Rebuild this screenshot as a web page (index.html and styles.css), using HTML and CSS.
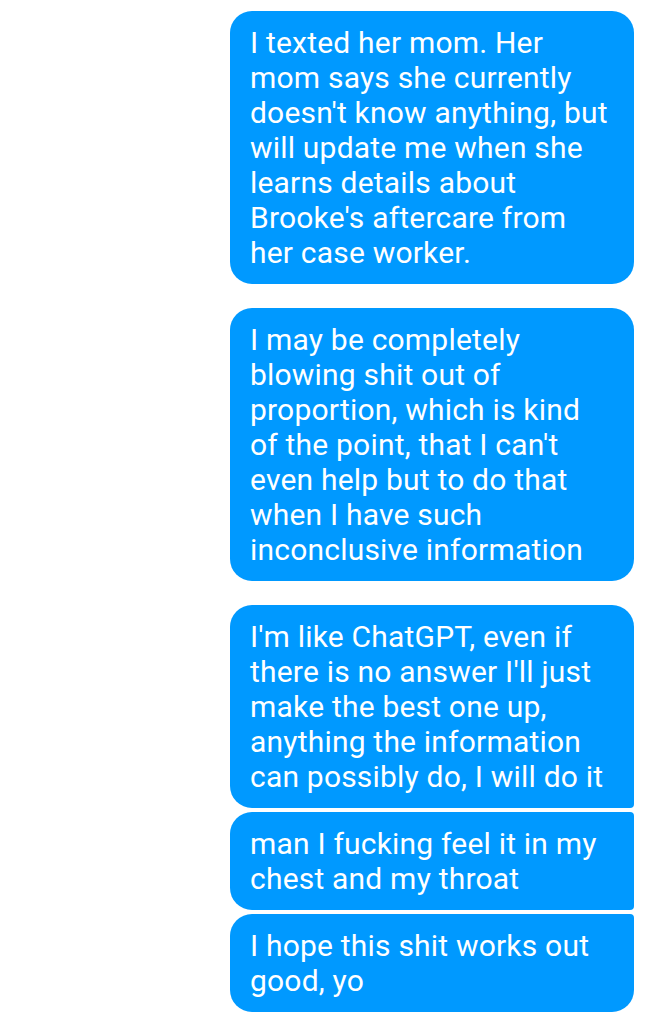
FILE: index.html
```html
<!DOCTYPE html>
<html>
<head>
<meta charset="utf-8">
<link rel="stylesheet" href="styles.css">
</head>
<body>
<div class="thread">
  <div class="group">
    <div class="bubble solo">I texted her mom. Her<br>mom says she currently<br>doesn't know anything, but<br>will update me when she<br>learns details about<br>Brooke's aftercare from<br>her case worker.</div>
  </div>
  <div class="group">
    <div class="bubble solo">I may be completely<br>blowing shit out of<br>proportion, which is kind<br>of the point, that I can't<br>even help but to do that<br>when I have such<br>inconclusive information</div>
  </div>
  <div class="group">
    <div class="bubble first">I'm like ChatGPT, even if<br>there is no answer I'll just<br>make the best one up,<br>anything the information<br>can possibly do, I will do it</div>
    <div class="bubble middle">man I fucking feel it in my<br>chest and my throat</div>
    <div class="bubble last">I hope this shit works out<br>good, yo</div>
  </div>
</div>
</body>
</html>
```

FILE: styles.css
```css
html, body {
  margin: 0;
  padding: 0;
  background: #ffffff;
}

.thread {
  display: flex;
  flex-direction: column;
  align-items: flex-end;
  gap: 24px;
  padding: 11px 14px 10px 0;
}

.group {
  display: flex;
  flex-direction: column;
  gap: 4px;
}

.bubble {
  box-sizing: border-box;
  width: 404px;
  background: #0099ff;
  color: #ffffff;
  font-family: Roboto, "Noto Sans", sans-serif;
  font-size: 30px;
  letter-spacing: 0.2px;
  line-height: 35px;
  padding: 14px 20px 14px 20px;
  border-radius: 22px;
  white-space: nowrap;
}

.bubble.first {
  border-radius: 22px 22px 4px 22px;
}

.bubble.middle {
  border-radius: 22px 4px 4px 22px;
}

.bubble.last {
  border-radius: 22px 4px 22px 22px;
}
```
